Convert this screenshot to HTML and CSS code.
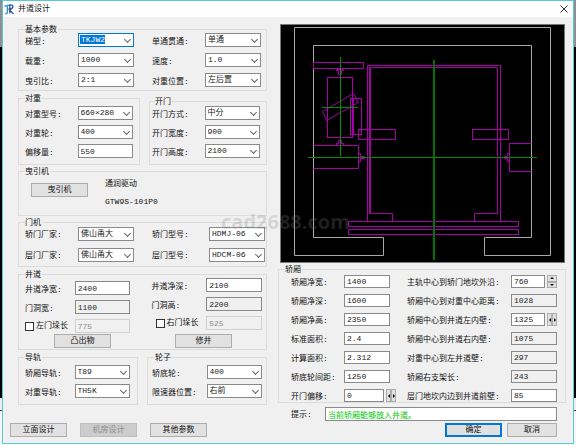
FILE: index.html
```html
<!DOCTYPE html>
<html lang="zh-CN">
<head>
<meta charset="utf-8">
<title>井道设计</title>
<link rel="stylesheet" href="styles.css">
</head>
<body>
<div class="window">
  <header class="titlebar">
    <svg class="logo" viewBox="0 0 10 11" aria-hidden="true">
      <path d="M0.3 2.6C1.8 0.8 3.2 1.9 5 1.2" fill="none" stroke="#3fa0dc" stroke-width="1.3"/>
      <path d="M3.3 2V8.8C3 9.6 2.3 9.9 1.2 9.8" fill="none" stroke="#2b7fc4" stroke-width="1.2"/>
      <path d="M4.8 1.2C8 0.2 9.4 1.8 8.6 3.6C8 5 6.6 5.4 5.4 5.4C6.8 6.6 7.4 8.6 9.6 9.8M5.8 1.6V9.6" fill="none" stroke="#1c4f9c" stroke-width="1.3"/>
    </svg>
    <h1>井道设计</h1>
    <button class="close" aria-label="关闭"><svg viewBox="0 0 8 8"><path d="M0.5 0.5L7.5 7.5M7.5 0.5L0.5 7.5" stroke="#333" fill="none"/></svg></button>
  </header>

  <main>
    <div class="left">
      <fieldset class="basic">
        <legend>基本参数</legend>
        <div class="pair">
          <div class="fields">
            <label for="type">梯型:</label><span class="combo"><select id="type" class="active"><option>TKJW2</option></select></span>
            <label for="load">载重:</label><span class="combo"><select id="load"><option>1000</option></select></span>
            <label for="ratio">曳引比:</label><span class="combo"><select id="ratio"><option>2:1</option></select></span>
          </div>
          <div class="fields">
            <label for="through">单通贯通:</label><span class="combo"><select id="through"><option>单通</option></select></span>
            <label for="speed">速度:</label><span class="combo"><select id="speed"><option>1.0</option></select></span>
            <label for="cwpos">对重位置:</label><span class="combo"><select id="cwpos"><option>左后置</option></select></span>
          </div>
        </div>
      </fieldset>

      <div class="groups weight-door">
        <fieldset class="weight">
          <legend>对重</legend>
          <div class="fields">
            <label for="cwtype">对重型号:</label><span class="combo"><select id="cwtype"><option>660×280</option></select></span>
            <label for="cwwheel">对重轮:</label><span class="combo"><select id="cwwheel"><option>400</option></select></span>
            <label for="offset">偏移量:</label><input id="offset" value="550">
          </div>
        </fieldset>
        <fieldset class="door">
          <legend>开门</legend>
          <div class="fields">
            <label for="dmode">开门方式:</label><span class="combo"><select id="dmode"><option>中分</option></select></span>
            <label for="dwidth">开门宽度:</label><span class="combo"><select id="dwidth"><option>900</option></select></span>
            <label for="dheight">开门高度:</label><span class="combo"><select id="dheight"><option>2100</option></select></span>
          </div>
        </fieldset>
      </div>

      <fieldset class="traction">
        <legend>曳引机</legend>
        <div class="machine">
          <button>曳引机</button>
          <div><p>通润驱动</p><p>GTW9S-101P0</p></div>
        </div>
      </fieldset>

      <fieldset class="operator">
        <legend>门机</legend>
        <div class="pair">
          <div class="fields">
            <label for="carmaker">轿门厂家:</label><span class="combo"><select id="carmaker"><option>佛山甬大</option></select></span>
            <label for="landmaker">层门厂家:</label><span class="combo"><select id="landmaker"><option>佛山甬大</option></select></span>
          </div>
          <div class="fields">
            <label for="carmodel">轿门型号:</label><span class="combo"><select id="carmodel"><option>HDMJ-06</option></select></span>
            <label for="landmodel">层门型号:</label><span class="combo"><select id="landmodel"><option>HDCM-06</option></select></span>
          </div>
        </div>
      </fieldset>

      <fieldset class="shaft">
        <legend>井道</legend>
        <div class="pair">
          <div class="fields lower">
            <label for="swidth">井道净宽:</label><input id="swidth" value="2400">
            <label for="hole">门洞宽:</label><input id="hole" value="1100" readonly>
            <label class="check"><input type="checkbox">左门垛长</label><input aria-label="左门垛长" value="775" disabled>
          </div>
          <div class="fields wide">
            <label for="sdepth">井道净深:</label><input id="sdepth" value="2100">
            <label for="holeh">门洞高:</label><input id="holeh" value="2200" readonly>
            <label class="check"><input type="checkbox">右门垛长</label><input aria-label="右门垛长" value="525" disabled>
          </div>
        </div>
        <div class="shaft-buttons"><button>凸出物</button><button>修井</button></div>
      </fieldset>

      <div class="groups rail-wheel">
        <fieldset class="rail">
          <legend>导轨</legend>
          <div class="fields">
            <label for="carrail">轿厢导轨:</label><span class="combo"><select id="carrail"><option>T89</option></select></span>
            <label for="cwrail">对重导轨:</label><span class="combo"><select id="cwrail"><option>TH5K</option></select></span>
          </div>
        </fieldset>
        <fieldset class="wheel">
          <legend>轮子</legend>
          <div class="fields wide">
            <label for="bottom">轿底轮:</label><span class="combo"><select id="bottom"><option>400</option></select></span>
            <label for="governor">限速器位置:</label><span class="combo"><select id="governor"><option>右前</option></select></span>
          </div>
        </fieldset>
      </div>
    </div>

    <div class="right">
      <svg class="plan" viewBox="280 24 285 239" role="img" aria-label="井道平面图">
        <rect x="280" y="24" width="285" height="239" fill="#000"/>
        <rect x="280.5" y="24.5" width="284" height="238" fill="none" stroke="#777"/>
        <g fill="none" stroke="#a8a8a8">
          <path d="M294.5 27.5H550.5V255.5H484.5V237.5H531.5V45.5H313.5V237.5H383.5V255.5H294.5Z"/>
        </g>
        <g fill="none" stroke="#a800a8">
          <rect x="313.5" y="62.5" width="50" height="6"/>
          <path d="M336.5 69.5H343.5V70.5H341.5V74.5H338.5V70.5H336.5Z"/>
          <rect x="327.5" y="77.5" width="25" height="60"/>
          <path d="M353.5 93.5L358.5 102.5L326.5 120.5L322.5 111.5Z"/>
          <rect x="350.5" y="98.5" width="11" height="36"/>
          <path d="M353.5 98V135"/>
          <rect x="358.5" y="129.5" width="37" height="10"/>
          <rect x="472.5" y="129.5" width="36" height="10"/>
          <path d="M367.5 221V65.5H500.5V221"/>
          <path d="M370.5 213.5V67.5H497.5V213.5"/>
          <path d="M369.5 66V213.5H392.5V221M498 213.5H474.5V221"/>
          <rect x="348.5" y="221.5" width="170" height="5"/>
          <rect x="348.5" y="229.5" width="170" height="5"/>
          <path d="M313.5 145.5H358.5V168.5H313.5"/>
          <path d="M531.5 143.5H509.5V171.5H531.5"/>
          <path d="M336.5 145V143.5H338.5V140.5H341.5V143.5H343.5V145"/>
          <path d="M359 153.5H360.5V156.5H364.5V158.5H360.5V161.5H359"/>
          <path d="M509 153.5H507.5V156.5H504.5V158.5H507.5V161.5H509"/>
        </g>
        <g fill="none" stroke="#009000">
          <path d="M340.5 57V156M322 107.5H358M308 157.5H537"/>
          <path d="M434 60V260" stroke="#007400" stroke-width="2"/>
        </g>
      </svg>

      <fieldset class="car">
        <legend>轿厢</legend>
        <div class="pair">
          <div class="fields">
            <label for="cwidth">轿厢净宽:</label><input id="cwidth" value="1400">
            <label for="cdepth">轿厢净深:</label><input id="cdepth" value="1600">
            <label for="cheight">轿厢净高:</label><input id="cheight" value="2350">
            <label for="area">标准面积:</label><input id="area" value="2.4">
            <label for="calc">计算面积:</label><input id="calc" value="2.312">
            <label for="wheelgap">轿底轮间距:</label><input id="wheelgap" value="1250">
            <label for="dooroff">开门偏移:</label>
            <span class="spin outside"><input id="dooroff" value="0"><span class="steps across"><button class="west" aria-label="向左"></button><button class="east" aria-label="向右"></button></span></span>
          </div>
          <div class="fields distances">
            <label for="d1">主轨中心到轿门地坎外沿:</label>
            <span class="spin"><input id="d1" value="760"><span class="steps"><button class="north" aria-label="增加"></button><button class="south" aria-label="减少"></button></span></span>
            <label for="d2">轿厢中心到对重中心距离:</label><input id="d2" value="1028" readonly>
            <label for="d3">轿厢中心到井道左内壁:</label>
            <span class="spin"><input id="d3" value="1325"><span class="steps across"><button class="west" aria-label="向左"></button><button class="east" aria-label="向右"></button></span></span>
            <label for="d4">轿厢中心到井道右内壁:</label><input id="d4" value="1075" readonly>
            <label for="d5">对重中心到左井道壁:</label><input id="d5" value="297" readonly>
            <label for="d6">轿厢右支架长:</label><input id="d6" value="243" readonly>
            <label for="d7">层门地坎内边到井道前壁:</label><input id="d7" value="85">
          </div>
        </div>
      </fieldset>
      <div class="hint"><label for="hint">提示:</label><input id="hint" value="当前轿厢能够放入井道。"></div>
    </div>
  </main>

  <footer>
    <button>立面设计</button>
    <button disabled>机房设计</button>
    <button>其他参数</button>
    <button class="ok">确定</button>
    <button class="cancel">取消</button>
  </footer>
  <div class="watermark">cad2688.com</div>
</div>
</body>
</html>
```
FILE: styles.css
```css
* { box-sizing: border-box; }

body {
  margin: 0;
  padding: 0 2px 1px;
  min-height: 100vh;
  background: linear-gradient(#8a8f92 0 47px, #000 47px 398px, #e8eeee 398px 410px, #444 410px 411px, #f4f8f8 411px);
  color: #111;
}

body, input, select, button {
  font: 8px/12px "Liberation Mono", "Noto Sans CJK SC", monospace;
}

p { margin: 0; }

.window {
  position: relative;
  height: calc(100vh - 1px);
  background: #f0f0f0;
  border: 1px solid #5cc8d2;
}

.titlebar {
  display: flex;
  align-items: center;
  gap: 4px;
  height: 16px;
  padding: 0 5px 0 1px;
  background: #fff;
}
.titlebar h1 { margin: 0; font-size: 8px; font-weight: 400; }
.logo { width: 10px; height: 11px; }

button {
  width: 57px;
  height: 14px;
  padding: 0;
  border: 1px solid #adadad;
  background: #e1e1e1;
  color: #111;
  white-space: nowrap;
}
button:disabled { background: #ccc; border-color: #bfbfbf; color: #8c8c8c; }

.titlebar .close {
  display: flex;
  width: 8px;
  height: 8px;
  margin-left: auto;
  border: 0;
  background: none;
}
.close svg { width: 8px; height: 8px; }

main {
  display: grid;
  grid-template-columns: 249fr 288fr;
  gap: 11px;
  padding: 7px 7px 0 15px;
}
.left { padding-top: 5px; }

fieldset {
  min-width: 0;
  margin: 0;
  border: 1px solid #dcdcdc;
}
legend {
  height: 1px;
  padding: 0 1px 0 0;
  line-height: 1px;
}

.pair { display: grid; grid-template-columns: 1fr 1fr; gap: 18px; }
.fields {
  display: grid;
  grid-template-columns: 53fr 56fr;
  grid-auto-rows: 14px;
  row-gap: 5px;
  align-content: start;
}
.fields > * { min-width: 0; }
label { padding-top: 3px; white-space: nowrap; }
.right label, .operator label { padding-top: 2px; }

input, select {
  width: 100%;
  height: 100%;
  min-width: 0;
  margin: 0;
  padding: 0 2px;
  border: 1px solid #8a8a8a;
  border-radius: 0;
  outline: 0;
  background: #fff;
  color: #222;
}
input[readonly] { background: #f0f0f0; }
input:disabled { background: #f0f0f0; border-color: #d0d0d0; color: #8c8c8c; }
select { appearance: none; }

.combo { position: relative; display: block; }
.combo::after {
  content: "";
  position: absolute;
  top: 4px;
  right: 4px;
  width: 4px;
  height: 4px;
  border: solid #666;
  border-width: 0 1px 1px 0;
  transform: rotate(45deg);
  pointer-events: none;
}
select.active {
  border-color: #0078d7;
  color: #fff;
  background: #fff linear-gradient(#0078d7, #0078d7) 1px 1px / 25px 9px no-repeat;
}

.basic { padding: 3px 5px 3px 6px; }
.basic .fields { row-gap: 6px; }

.groups { display: grid; align-items: end; }
.weight-door { grid-template-columns: 122fr 118fr; gap: 9px; margin-top: 7px; }
.weight { padding: 7px 6px 6px; }
.door { padding: 4px 6px 6px 2px; }
.door legend, .wheel legend { margin-left: 3px; }

.traction { margin-top: 6px; padding: 3px 6px 4px; }
.machine { display: flex; align-items: center; gap: 17px; padding-left: 6px; line-height: 18px; }
.machine button { margin-bottom: 6px; }

.operator { margin-top: 6px; padding: 4px 1px 4px 6px; }
.operator .pair { grid-template-columns: 109fr 113fr; }
.operator .fields { row-gap: 7px; }
.operator .fields + .fields { grid-template-columns: 57fr 56fr; }

.shaft { margin-top: 7px; padding: 3px 4px 1px 6px; }
.shaft .pair { grid-template-columns: 106fr 111fr; gap: 21px; }
.shaft .fields, .rail .fields { grid-template-columns: 50fr 56fr; }
.shaft .wide, .wheel .wide { grid-template-columns: 55fr 56fr; }
.lower { margin-top: 3px; }
.shaft .check { display: flex; align-items: center; gap: 2px; padding-top: 0; }
.wide .check { padding-left: 4px; }
.check input {
  appearance: none;
  flex: none;
  width: 9px;
  height: 9px;
  border-color: #333;
}
.shaft-buttons { display: flex; justify-content: space-between; margin-top: 1px; padding: 0 30px 0 29px; }

.rail-wheel { grid-template-columns: 120fr 120fr; gap: 9px; margin-top: 7px; }
.rail { padding: 7px 7px 6px 6px; }
.wheel { padding: 7px 4px 6px; }

.plan { display: block; width: calc(100% - 3px); margin-left: 2px; }

.car { margin-top: 6px; padding: 5px 8px 0 6px; }
.car .pair { grid-template-columns: 99fr 150fr; gap: 17px; padding-left: 6px; }
.car .fields { grid-template-columns: 53fr 46fr; grid-auto-rows: 13px; row-gap: 6px; }
.car .distances { grid-template-columns: 104fr 46fr; }

.spin { display: flex; gap: 2px; }
.spin.outside { margin-right: -6px; }
.steps { display: flex; flex: none; flex-direction: column; width: 10px; }
.steps.across { flex-direction: row; }
.steps button {
  display: flex;
  flex: 1;
  align-items: center;
  justify-content: center;
  width: auto;
  min-width: 0;
  min-height: 0;
  height: auto;
}
.steps button::before {
  content: "";
  flex: none;
  border: 2px solid transparent;
}
.west::before, .east::before { width: 0; }
.steps .west::before { border-width: 2px 2px 2px 0; border-right-color: #000; }
.steps .east::before { border-width: 2px 0 2px 2px; border-left-color: #000; }
.steps .north::before { border-width: 0 2px 2px; border-bottom-color: #000; }
.steps .south::before { border-width: 2px 2px 0; border-top-color: #000; }

.hint { display: grid; grid-template-columns: 34fr 232fr; height: 13px; margin: 4px 9px 0 13px; }
.hint input { color: #00c800; }

footer { display: flex; gap: 13px; padding: 3px 16px 0 7px; }
.ok { margin-left: auto; border: 2px solid #0078d7; }
footer .ok { line-height: 10px; }
footer .cancel { width: 50px; margin-left: -8px; }

.watermark {
  position: absolute;
  top: 50%;
  left: 50%;
  transform: translate(-52%, -50%);
  color: rgba(128, 128, 128, 0.25);
  font: bold 20px/24px "Open Sans", sans-serif;
  pointer-events: none;
}
```
